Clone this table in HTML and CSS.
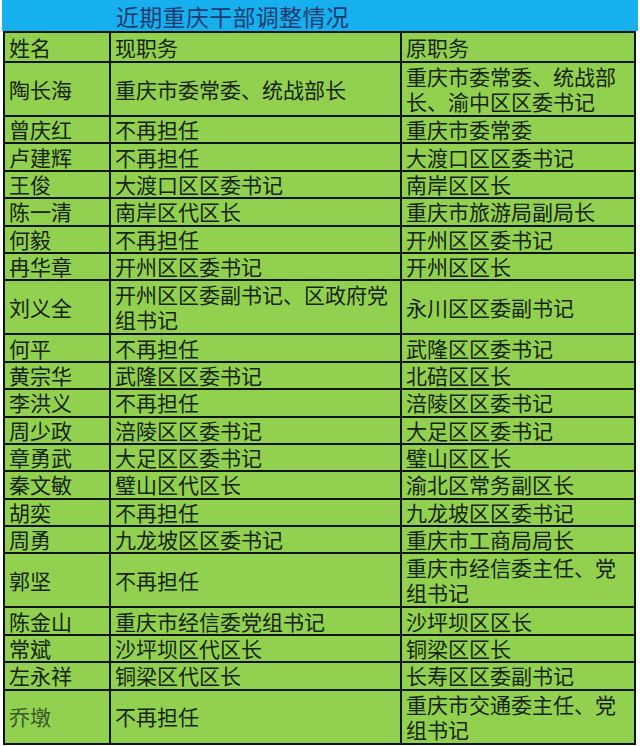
FILE: index.html
```html
<!DOCTYPE html>
<html lang="zh-CN">
<head>
<meta charset="utf-8">
<title>近期重庆干部调整情况</title>
<link rel="stylesheet" href="styles.css">
</head>
<body>
<div class="sheet">
  <div class="title-band"><h1 class="title">近期重庆干部调整情况</h1></div>
  <div class="roster">
    <div class="cell">姓名</div><div class="cell">现职务</div><div class="cell">原职务</div>
    <div class="cell">陶长海</div><div class="cell">重庆市委常委、统战部长</div><div class="cell">重庆市委常委、统战部长、渝中区区委书记</div>
    <div class="cell">曾庆红</div><div class="cell">不再担任</div><div class="cell">重庆市委常委</div>
    <div class="cell">卢建辉</div><div class="cell">不再担任</div><div class="cell">大渡口区区委书记</div>
    <div class="cell">王俊</div><div class="cell">大渡口区区委书记</div><div class="cell">南岸区区长</div>
    <div class="cell">陈一清</div><div class="cell">南岸区代区长</div><div class="cell">重庆市旅游局副局长</div>
    <div class="cell">何毅</div><div class="cell">不再担任</div><div class="cell">开州区区委书记</div>
    <div class="cell">冉华章</div><div class="cell">开州区区委书记</div><div class="cell">开州区区长</div>
    <div class="cell">刘义全</div><div class="cell">开州区区委副书记、区政府党组书记</div><div class="cell">永川区区委副书记</div>
    <div class="cell">何平</div><div class="cell">不再担任</div><div class="cell">武隆区区委书记</div>
    <div class="cell">黄宗华</div><div class="cell">武隆区区委书记</div><div class="cell">北碚区区长</div>
    <div class="cell">李洪义</div><div class="cell">不再担任</div><div class="cell">涪陵区区委书记</div>
    <div class="cell">周少政</div><div class="cell">涪陵区区委书记</div><div class="cell">大足区区委书记</div>
    <div class="cell">章勇武</div><div class="cell">大足区区委书记</div><div class="cell">璧山区区长</div>
    <div class="cell">秦文敏</div><div class="cell">璧山区代区长</div><div class="cell">渝北区常务副区长</div>
    <div class="cell">胡奕</div><div class="cell">不再担任</div><div class="cell">九龙坡区区委书记</div>
    <div class="cell">周勇</div><div class="cell">九龙坡区区委书记</div><div class="cell">重庆市工商局局长</div>
    <div class="cell">郭坚</div><div class="cell">不再担任</div><div class="cell">重庆市经信委主任、党组书记</div>
    <div class="cell">陈金山</div><div class="cell">重庆市经信委党组书记</div><div class="cell">沙坪坝区区长</div>
    <div class="cell">常斌</div><div class="cell">沙坪坝区代区长</div><div class="cell">铜梁区区长</div>
    <div class="cell">左永祥</div><div class="cell">铜梁区代区长</div><div class="cell">长寿区区委副书记</div>
    <div class="cell faded">乔墩</div><div class="cell">不再担任</div><div class="cell">重庆市交通委主任、党组书记</div>
  </div>
</div>
</body>
</html>
```

FILE: styles.css
```css
html, body {
  margin: 0;
  padding: 0;
  background: #ffffff;
}

.sheet {
  width: 636px;
  padding-left: 2px;
  font-family: "Noto Sans CJK SC", "Noto Sans", sans-serif;
}

.title-band {
  height: 31px;
  background: #16b0ef;
  display: flex;
  align-items: center;
  padding-left: 114px;
}

.title {
  margin: 0;
  font-size: 23px;
  font-weight: 400;
  line-height: 28px;
  color: #1d3a70;
  letter-spacing: 0.3px;
}

.roster {
  width: 633px;
  margin-left: 1px;
  box-sizing: border-box;
  padding: 2px;
  background: #101410;
  display: grid;
  grid-template-columns: 104px 289px 232px;
  grid-template-rows:
    28px 52px 25.4px 25.4px 25.4px 25.4px 25.4px 25.4px 52px
    25.4px 25.4px 25.4px 25.4px 25.4px 25.4px 25.4px 25.4px 52px
    25.4px 25.4px 25.4px 52px;
  gap: 2px;
  color: #16230f;
  font-size: 21px;
}

.cell {
  background: #92d050;
  display: flex;
  align-items: center;
  padding: 0 2px 0 4px;
  line-height: 25px;
  word-break: break-all;
}

.cell.faded {
  color: #3b5a2a;
}
```
